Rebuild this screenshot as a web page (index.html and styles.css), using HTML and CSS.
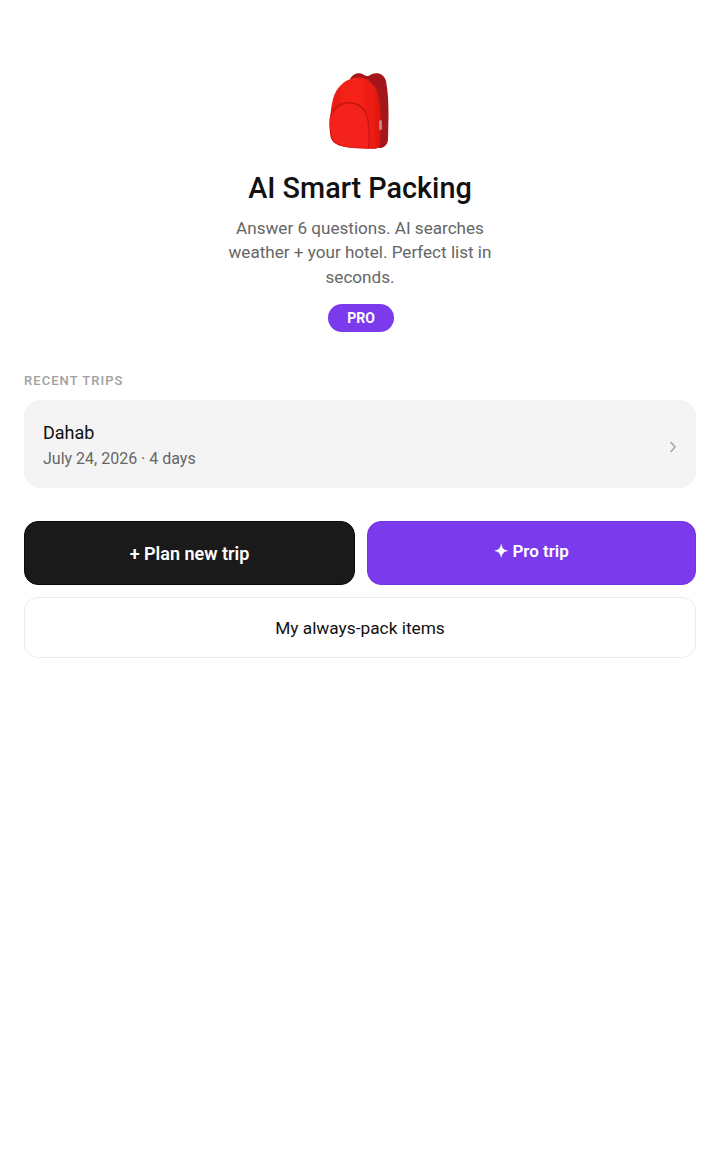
FILE: index.html
```html
<!DOCTYPE html>
<html lang="en">
<head>
  <meta charset="UTF-8">
  <title>AI Smart Packing</title>
  <link rel="stylesheet" href="styles.css">
</head>
<body>

  <div class="hero">
    <svg class="backpack" width="60" height="80" viewBox="0 0 60 80" aria-hidden="true">
      <defs>
        <linearGradient id="body-red" x1="0" y1="0" x2="1" y2="0">
          <stop offset="0" stop-color="#e81c16"/>
          <stop offset="0.5" stop-color="#f8241a"/>
          <stop offset="1" stop-color="#e4170f"/>
        </linearGradient>
        <filter id="soft" x="-5%" y="-5%" width="110%" height="110%">
          <feGaussianBlur stdDeviation="0.6"/>
        </filter>
      </defs>
      <g filter="url(#soft)">
        <!-- back panel and top handle -->
        <path d="M21 8 C24 2 31 1 35 4 C38 6 40 5 43 3 C49 1 55 3 57 10 C59 20 59.5 32 59.5 46 L59 68 C59 73 56 76 52 77 L40 76 L30 12 Z" fill="#a3141a"/>
        <path d="M45 12 C50 20 52 32 52 50 L51 76 L46 78 L44 50 Z" fill="#c21618"/>
        <!-- main body -->
        <path d="M4 28 C7 17 15 9 25 7 C34 5 42 9 46 17 C50 27 51 38 51 50 L51 71 C51 75 48 78 44 78 L24 77 C12 76 4 73 2 67 C0 56 1 40 4 28 Z" fill="url(#body-red)"/>
        <!-- front pocket seam and face -->
        <path d="M0.5 48 C2 38 10 31 20 31 C31 31 38 38 39.5 50 C40.5 60 41 70 40 77.5 L24 77 C12 76 4 73 2 67 C0.5 61 0 54 0.5 48 Z" fill="#c4150f"/>
        <path d="M1 49 C3 39 11 32.5 20 32.5 C30 32.5 37 39 38.5 50 C39.5 60 40 69 39 77 L24 76.5 C12 75.5 5 72.5 3 66.5 C1.5 61 0.5 54 1 49 Z" fill="#f3211a"/>
        <!-- zip pull -->
        <rect x="50" y="49" width="3" height="10" rx="1.5" fill="#b88a84"/>
      </g>
    </svg>
    <h1>AI Smart Packing</h1>
    <p class="sub">Answer 6 questions. AI searches weather + your hotel. Perfect list in seconds.</p>
    <span class="pro-badge">PRO</span>
  </div>

  <div class="recent">
    <div class="section-label">RECENT TRIPS</div>
    <div class="trip-card">
      <div class="trip-text">
        <div class="trip-name">Dahab</div>
        <div class="trip-meta">July 24, 2026 · 4 days</div>
      </div>
      <svg class="chevron" width="8" height="14" viewBox="0 0 8 14" aria-hidden="true">
        <path d="M1.5 2 L6 7 L1.5 12" fill="none" stroke="#a5a5a5" stroke-width="1.5"/>
      </svg>
    </div>
  </div>

  <div class="actions">
    <div class="action-row">
      <button class="btn btn-dark">+ Plan new trip</button>
      <button class="btn btn-purple">✦ Pro trip</button>
    </div>
    <button class="btn-outline">My always-pack items</button>
  </div>

</body>
</html>
```

FILE: styles.css
```css
body {
  font-family: Roboto, Arial, sans-serif;
  background: #fff;
  color: #111;
  margin: 0;
  padding: 0;
}

.hero {
  display: flex;
  flex-direction: column;
  align-items: center;
  padding-top: 71px;
  text-align: center;
}

.backpack {
  display: block;
  margin-left: -2px;
}

.hero h1 {
  margin: 18px 0 0;
  font-size: 28.8px;
  line-height: 38px;
  font-weight: 500;
  color: #111;
}

.sub {
  margin: 8.6px 0 0;
  width: 290px;
  font-size: 17.1px;
  line-height: 24.5px;
  color: #666;
}

.pro-badge {
  margin: 15.4px 0 0 2px;
  width: 66px;
  height: 28px;
  line-height: 28px;
  border-radius: 14px;
  background: #7c3aed;
  color: #fff;
  font-size: 14px;
  font-weight: 700;
}

.recent {
  margin: 41px 24px 0;
}

.section-label {
  font-size: 13px;
  line-height: 16px;
  font-weight: 500;
  letter-spacing: 1.05px;
  color: #a0a0a0;
}

.trip-card {
  display: flex;
  justify-content: space-between;
  align-items: center;
  box-sizing: border-box;
  height: 88px;
  margin-top: 11px;
  padding: 0 19px;
  background: #f4f4f4;
  border-radius: 16px;
}

.trip-text {
  padding-top: 3px;
}

.trip-name {
  font-size: 18px;
  line-height: 24px;
  color: #111;
}

.trip-meta {
  margin-top: 3px;
  font-size: 16px;
  line-height: 22px;
  color: #666;
}

.chevron {
  margin-top: 5px;
}

.actions {
  display: flex;
  flex-direction: column;
  gap: 12px;
  margin: 33px 24px 0;
}

.action-row {
  display: flex;
  gap: 12px;
}

.btn {
  height: 64px;
  border-radius: 14px;
  color: #fff;
  font-family: inherit;
  font-size: 18px;
  font-weight: 600;
}

.btn-dark {
  width: 331px;
  padding-top: 2px;
  background: #1a1a1a;
  border: 1px solid #0a0a0a;
}

.btn-purple {
  width: 329px;
  padding-bottom: 5px;
  background: #7c3aed;
  border: 1px solid #7434e2;
  font-size: 17px;
}

.btn-outline {
  height: 61px;
  background: #fff;
  border: 1px solid #ececec;
  border-radius: 14px;
  color: #111;
  font-family: inherit;
  font-size: 17.3px;
  font-weight: 400;
}
```
